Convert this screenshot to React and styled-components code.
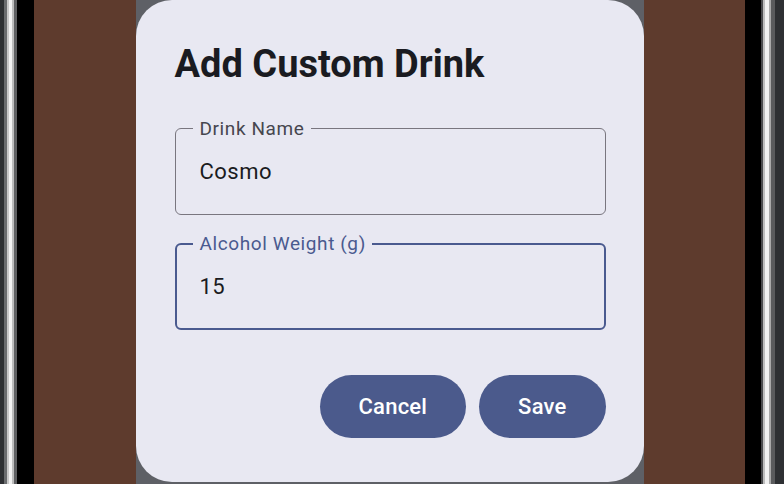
import React, { useState } from 'react';
import styled, { createGlobalStyle } from 'styled-components';

const GlobalStyle = createGlobalStyle`
  html, body { margin: 0; padding: 0; background: #000; }
  body { font-family: Roboto, "Noto Sans", sans-serif; }
  #root { width: 784px; height: 484px; overflow: hidden; }
`;

const Device = styled.div`
  display: flex;
  width: 784px;
  height: 484px;
  background: #000;
`;

const Rail = styled.div`
  width: ${(p) => p.$width}px;
  flex-shrink: 0;
  background: ${(p) =>
    p.$side === 'left'
      ? 'linear-gradient(90deg, #2e3033 0 4px, #6a6c6e 4px 7px, #c9c9c9 7px 9px, #f2f2f2 9px 12px, #bdbdbd 12px 14px, #5f6062 14px 17px, #000 17px)'
      : 'linear-gradient(90deg, #000 0 16px, #4a4b4d 16px 18px, #bdbdbd 18px 20px, #f0f0f0 20px 24px, #a9a9a9 24px 26px, #5a5b5d 26px 30px, #2e3033 30px)'};
`;

const Screen = styled.div`
  flex: 1;
  display: flex;
  justify-content: center;
  background: #5e3b2d;
`;

const Scrim = styled.div`
  width: 508px;
  background: #5e6066;
  display: flex;
  flex-direction: column;
`;

const Dialog = styled.div`
  background: #e8e8f2;
  border-radius: 36px;
  padding: 42px 38px 44px 39px;
  display: flex;
  flex-direction: column;
`;

const Title = styled.h2`
  margin: 0 0 42px;
  font-size: 38px;
  line-height: 44px;
  font-weight: 700;
  color: #1a1b21;
  letter-spacing: 0;
`;

const Fields = styled.div`
  display: flex;
  flex-direction: column;
  gap: 28px;
`;

const Field = styled.label`
  position: relative;
  display: flex;
  align-items: center;
  height: 87px;
  box-sizing: border-box;
  border: ${(p) => (p.$focused ? '2px solid #4a5a8f' : '1px solid #79767f')};
  border-radius: 6px;
  padding: 0 ${(p) => (p.$focused ? 23 : 24)}px;
`;

const FieldLabel = styled.span`
  position: absolute;
  top: 0;
  left: ${(p) => (p.$focused ? 16 : 17)}px;
  transform: translateY(-50%);
  margin-top: ${(p) => (p.$focused ? -1 : -0.5)}px;
  padding: 0 6px 0 7px;
  background: #e8e8f2;
  font-size: 19px;
  line-height: 22px;
  letter-spacing: 0.6px;
  color: ${(p) => (p.$focused ? '#4a5a8f' : '#46464f')};
`;

const Input = styled.input`
  flex: 1;
  border: 0;
  outline: none;
  background: transparent;
  padding: 0;
  font-family: Roboto, "Noto Sans", sans-serif;
  font-size: 22px;
  letter-spacing: 0.5px;
  color: #1a1b21;
`;

const Actions = styled.div`
  display: flex;
  justify-content: flex-end;
  gap: 13px;
  margin-top: 45px;
`;

const Button = styled.button`
  height: 63px;
  padding: 0 39px;
  border: 0;
  border-radius: 32px;
  background: #4b5a8c;
  color: #fff;
  font-family: Roboto, "Noto Sans", sans-serif;
  font-size: 22px;
  font-weight: 500;
  letter-spacing: 0.2px;
  cursor: pointer;
`;

const App = () => {
  const [name, setName] = useState('Cosmo');
  const [weight, setWeight] = useState('15');

  return (
    <>
      <GlobalStyle />
      <Device>
        <Rail $side="left" $width={34} />
        <Screen>
          <Scrim>
            <Dialog>
              <Title>Add Custom Drink</Title>
              <Fields>
                <Field>
                  <FieldLabel>Drink Name</FieldLabel>
                  <Input value={name} onChange={(e) => setName(e.target.value)} />
                </Field>
                <Field $focused>
                  <FieldLabel $focused>Alcohol Weight (g)</FieldLabel>
                  <Input value={weight} onChange={(e) => setWeight(e.target.value)} />
                </Field>
              </Fields>
              <Actions>
                <Button>Cancel</Button>
                <Button>Save</Button>
              </Actions>
            </Dialog>
          </Scrim>
        </Screen>
        <Rail $side="right" $width={39} />
      </Device>
    </>
  );
};

export default App;
